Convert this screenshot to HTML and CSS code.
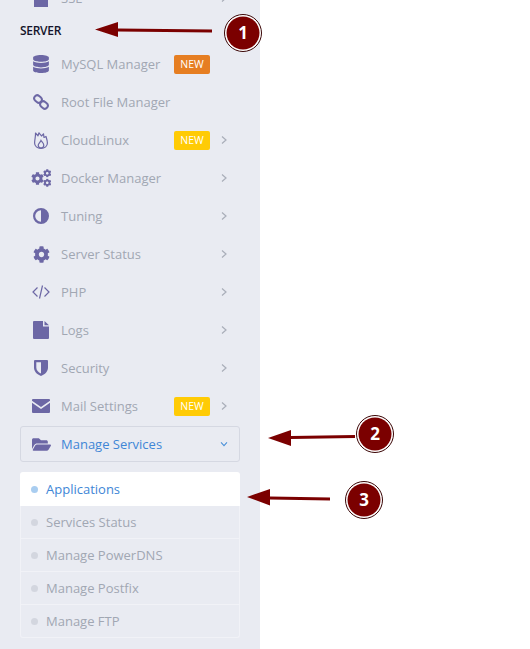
FILE: index.html
```html
<!DOCTYPE html>
<html lang="en">
<head>
<meta charset="utf-8">
<title>Server menu</title>
<link rel="stylesheet" href="styles.css">
</head>
<body>
<svg class="defs" width="0" height="0" aria-hidden="true">
  <defs>
    <symbol id="cog" viewBox="0 0 512 512"><path d="M487.4 315.7l-42.6-24.6c4.3-23.2 4.3-47 0-70.2l42.6-24.6c4.9-2.8 7.1-8.6 5.5-14-11.1-35.6-30-67.8-54.7-94.6-3.8-4.1-10-5.1-14.8-2.3L380.8 110c-17.9-15.4-38.5-27.3-60.8-35.1V25.8c0-5.6-3.9-10.5-9.4-11.7-36.7-8.2-74.3-7.8-109.2 0-5.5 1.2-9.4 6.1-9.4 11.7V75c-22.2 7.9-42.8 19.8-60.8 35.1L88.7 85.5c-4.9-2.8-11-1.9-14.8 2.3-24.7 26.7-43.6 58.9-54.7 94.6-1.7 5.4.6 11.2 5.5 14L67.3 221c-4.3 23.2-4.3 47 0 70.2l-42.6 24.6c-4.9 2.8-7.1 8.6-5.5 14 11.1 35.6 30 67.8 54.7 94.6 3.8 4.1 10 5.1 14.8 2.3l42.6-24.6c17.9 15.4 38.5 27.3 60.8 35.1v49.2c0 5.6 3.9 10.5 9.4 11.7 36.7 8.2 74.3 7.8 109.2 0 5.5-1.2 9.4-6.1 9.4-11.7v-49.2c22.2-7.9 42.8-19.8 60.8-35.1l42.6 24.6c4.9 2.8 11 1.9 14.8-2.3 24.7-26.7 43.6-58.9 54.7-94.6 1.5-5.5-.7-11.3-5.6-14.1zM256 336c-44.1 0-80-35.9-80-80s35.9-80 80-80 80 35.9 80 80-35.9 80-80 80z"/></symbol>
    <symbol id="chev" viewBox="0 0 8 10"><path d="M2 1.500 6 5 2 8.500" fill="none" stroke="currentColor" stroke-width="1.200"/></symbol>
  </defs>
</svg>
<div class="stage">
  <nav class="sidebar">
    <a class="row row-clipped">
      <span class="ico"><svg viewBox="0 0 18 18" width="18" height="18"><path d="M2 0h14v18H2z"/></svg></span>
      <span class="label">SSL</span>
      <svg class="chev"><use href="#chev"/></svg>
    </a>
    <h2 class="heading">SERVER</h2>

    <a class="row">
      <span class="ico"><svg viewBox="0 0 448 512" width="16" height="18"><path d="M448 73.143v45.714C448 159.143 347.667 192 224 192S0 159.143 0 118.857V73.143C0 32.857 100.333 0 224 0s224 32.857 224 73.143zM448 176v102.857C448 319.143 347.667 352 224 352S0 319.143 0 278.857V176c48.125 33.143 136.208 48.572 224 48.572S399.874 209.143 448 176zm0 160v102.857C448 479.143 347.667 512 224 512S0 479.143 0 438.857V336c48.125 33.143 136.208 48.572 224 48.572S399.874 369.143 448 336z"/></svg></span>
      <span class="label">MySQL Manager</span>
      <span class="badge badge-orange">NEW</span>
      <span class="chev-gap"></span>
    </a>
    <a class="row">
      <span class="ico"><svg viewBox="0 0 16 16" width="16" height="16"><g class="line-2"><rect x="1" y="2" width="8" height="6" rx="3" transform="rotate(40 5 5)"/><rect x="7" y="8" width="8" height="6" rx="3" transform="rotate(40 11 11)"/></g></svg></span>
      <span class="label">Root File Manager</span>
    </a>
    <a class="row">
      <span class="ico"><svg viewBox="0 0 14 17" width="14" height="17"><g class="line-1"><path stroke-linejoin="round" d="M1.500 1 4 3.800 5 .8 7.500 4 9.500 1.800 10 5.500 12 4.500C12.800 7 13.400 8.800 13.400 11 13.400 14.200 10.800 16.400 7 16.400S.6 14.200.6 11C.6 7.500 1.800 4.500 1.500 1z"/><path d="M7 8.500C7.800 10 9.800 11 9.800 13.300 9.800 15 8.600 16 7 16S4.200 15 4.200 13.300C4.200 11.500 6.300 10.300 7 8.500z"/></g></svg></span>
      <span class="label">CloudLinux</span>
      <span class="badge badge-yellow">NEW</span>
      <svg class="chev"><use href="#chev"/></svg>
    </a>
    <a class="row">
      <span class="ico"><svg viewBox="0 0 20 18" width="20" height="18"><use href="#cog" x="0" y="3" width="13" height="13"/><use href="#cog" x="12" y="0" width="8.500" height="8.500"/><use href="#cog" x="12" y="9.500" width="8.500" height="8.500"/></svg></span>
      <span class="label">Docker Manager</span>
      <svg class="chev"><use href="#chev"/></svg>
    </a>
    <a class="row">
      <span class="ico"><svg viewBox="0 0 16 16" width="16" height="16"><path fill-rule="evenodd" d="M8 0a8 8 0 1 1 0 16A8 8 0 0 1 8 0zm0 2.200a5.800 5.800 0 0 0 0 11.600z"/></svg></span>
      <span class="label">Tuning</span>
      <svg class="chev"><use href="#chev"/></svg>
    </a>
    <a class="row">
      <span class="ico"><svg width="17" height="17"><use href="#cog"/></svg></span>
      <span class="label">Server Status</span>
      <svg class="chev"><use href="#chev"/></svg>
    </a>
    <a class="row">
      <span class="ico"><svg viewBox="0 0 18 14" width="18" height="14"><g class="line-1"><path d="M5.500 2.500 1 7l4.500 4.500M12.500 2.500 17 7l-4.500 4.500M10.500.5l-3 13"/></g></svg></span>
      <span class="label">PHP</span>
      <svg class="chev"><use href="#chev"/></svg>
    </a>
    <a class="row">
      <span class="ico"><svg viewBox="0 0 16 18" width="16" height="18"><path d="M1 0h9v5.500h6V17a1 1 0 0 1-1 1H1a1 1 0 0 1-1-1V1a1 1 0 0 1 1-1zm10.500 0L16 4.200h-4.500z"/></svg></span>
      <span class="label">Logs</span>
      <svg class="chev"><use href="#chev"/></svg>
    </a>
    <a class="row">
      <span class="ico"><svg viewBox="0 0 14 16" width="14" height="16"><path fill-rule="evenodd" d="M1 0h12a1 1 0 0 1 1 1v6.500c0 4-3 7-7 8.500-4-1.500-7-4.500-7-8.500V1a1 1 0 0 1 1-1zm6 2.300H2.300v5.200c0 2.800 2 4.800 4.700 6.100z"/></svg></span>
      <span class="label">Security</span>
      <svg class="chev"><use href="#chev"/></svg>
    </a>
    <a class="row">
      <span class="ico"><svg viewBox="0 0 18 14" width="18" height="14"><path d="M1 0h16a1 1 0 0 1 1 1v.8L9 8 0 1.800V1a1 1 0 0 1 1-1zM0 3.800 9 10l9-6.200V13a1 1 0 0 1-1 1H1a1 1 0 0 1-1-1z"/></svg></span>
      <span class="label">Mail Settings</span>
      <span class="badge badge-yellow">NEW</span>
      <svg class="chev"><use href="#chev"/></svg>
    </a>

    <a class="row row-open">
      <span class="ico"><svg viewBox="0 0 576 512" width="19" height="17"><path d="M572.694 292.093L500.27 416.248A63.997 63.997 0 0 1 444.989 448H45.025c-18.523 0-30.064-20.093-20.731-36.093l72.424-124.155A64 64 0 0 1 152 256h399.964c18.523 0 30.064 20.093 20.73 36.093zM152 224h328v-48c0-26.51-21.49-48-48-48H272l-64-64H48C21.49 64 0 85.49 0 112v278.046l69.077-118.418C86.214 242.25 117.989 224 152 224z"/></svg></span>
      <span class="label">Manage Services</span>
      <svg class="chev chev-down"><use href="#chev"/></svg>
    </a>

    <ul class="sub">
      <li class="sub-item sub-active"><i class="dot"></i>Applications</li>
      <li class="sub-item"><i class="dot"></i>Services Status</li>
      <li class="sub-item"><i class="dot"></i>Manage PowerDNS</li>
      <li class="sub-item"><i class="dot"></i>Manage Postfix</li>
      <li class="sub-item"><i class="dot"></i>Manage FTP</li>
    </ul>
  </nav>

  <svg class="notes" width="530" height="649" viewBox="0 0 530 649">
    <g class="note-arrow">
      <path d="M95 29.500 118 22v6.500l94 1v3l-94-1V37z"/>
      <path d="M268 438 291 430v6l64-1v3l-64 1v7z"/>
      <path d="M247 497 270 489v7.500l60 1v3l-60-1v6z"/>
    </g>
    <g class="note-badge">
      <circle class="ring" cx="243" cy="33" r="18.500"/><circle class="disc" cx="243" cy="33" r="16.500"/><text x="243" y="39">1</text>
      <circle class="ring" cx="375" cy="434" r="18.500"/><circle class="disc" cx="375" cy="434" r="16.500"/><text x="375" y="440">2</text>
      <circle class="ring" cx="364" cy="500" r="18.500"/><circle class="disc" cx="364" cy="500" r="16.500"/><text x="364" y="506">3</text>
    </g>
  </svg>
</div>
</body>
</html>
```
FILE: styles.css
```css
* { box-sizing: border-box; }
html, body { margin: 0; padding: 0; background: #fff; }
body { width: 530px; height: 649px; overflow: hidden; font-family: "Open Sans", "Liberation Sans", sans-serif; }
.defs { position: absolute; }
.stage { position: relative; width: 530px; height: 649px; overflow: hidden; }
.sidebar { width: 260px; height: 649px; background: #e9ebf2; display: flex; flex-direction: column; overflow: hidden; }
.row { height: 38px; margin: 0 20px; padding: 0 0 0 10px; display: flex; align-items: center; font-size: 13px; color: #a1a7b3; flex: none; }
.row-clipped { margin-top: -21px; }
.ico { width: 22px; flex: none; display: flex; align-items: center; justify-content: center; margin-right: 9px; }
.ico svg { fill: #6c67a5; display: block; }
.line-1, .line-2 { fill: none; stroke: #6c67a5; }
.line-1 { stroke-width: 1.200; }
.line-2 { stroke-width: 2; }
.label { flex: 1; white-space: nowrap; }
.heading { height: 28px; margin: 0 0 0 20px; font-size: 12px; font-weight: 600; letter-spacing: -0.3px; line-height: 27px; color: #14142b; flex: none; }
.badge { width: 36px; height: 19px; margin-right: 10px; border-radius: 2px; color: #fff; font-size: 10.500px; line-height: 19px; text-align: center; flex: none; }
.badge-orange { background: #e67e22; }
.badge-yellow { background: #ffcb05; }
.chev { width: 8px; height: 10px; color: #a9aeb9; margin-right: 12px; flex: none; }
.chev-gap { width: 20px; flex: none; }
.chev-down { color: #4a90d9; transform: rotate(90deg) scale(.85); }
.row-open { height: 36px; margin-top: 1px; margin-bottom: 10px; border: 1px solid #d5d8e2; border-radius: 3px; padding-left: 9px; }
.row-open .label { color: #4086d6; }
.row-open .chev { margin-right: 11px; }
.sub { list-style: none; margin: 0 20px; padding: 0; flex: none; }
.sub-item { height: 33px; padding-left: 11px; display: flex; align-items: center; font-size: 13px; color: #a1a7b3; border: 1px solid #f1f2f7; border-width: 0 1px 1px; }
.sub-item:last-child { border-radius: 0 0 3px 3px; }
.sub-active { height: 34px; background: #fff; color: #4086d6; border: 0; border-radius: 3px 3px 0 0; }
.dot { width: 7px; height: 7px; border-radius: 50%; background: #d3d6df; margin-right: 8px; flex: none; }
.sub-item:not(.sub-active) .dot { margin-left: -1px; }
.sub-active .dot { background: #a9cdf0; }
.notes { position: absolute; left: 0; top: 0; pointer-events: none; }
.note-arrow path { fill: #7b0000; }
.ring { fill: #fff; stroke: #3a0505; stroke-width: 1; }
.disc { fill: #7b0000; }
.note-badge text { fill: #fff; font-family: "Open Sans", sans-serif; font-weight: 700; font-size: 17px; text-anchor: middle; }
```
